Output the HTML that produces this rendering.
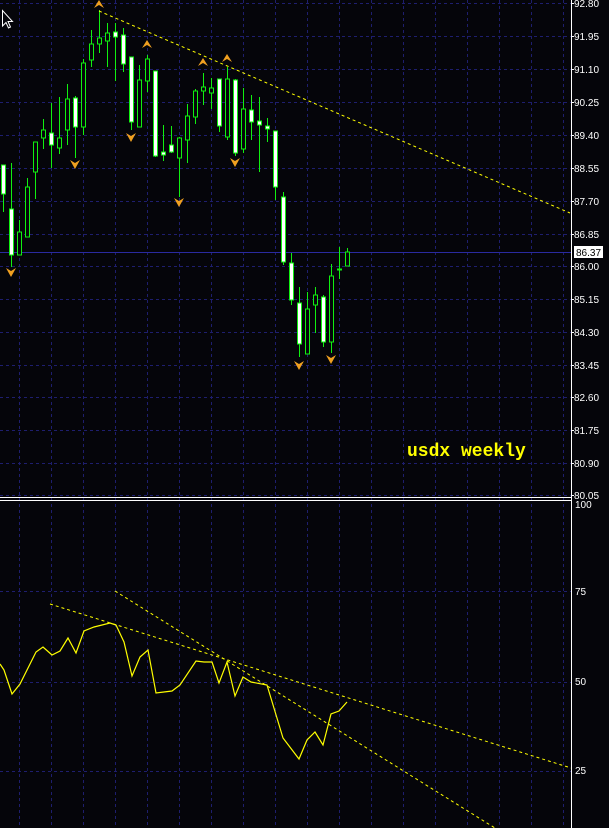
<!DOCTYPE html>
<html><head><meta charset="utf-8"><style>
html,body{margin:0;padding:0;background:#05050a;}
svg{display:block;}
.ax{font-family:"Liberation Sans",sans-serif;font-size:10px;fill:#fff;}
</style></head><body>
<svg width="609" height="828" viewBox="0 0 609 828" xmlns="http://www.w3.org/2000/svg">
<rect width="609" height="828" fill="#05050a"/>
<g stroke="#1e1e6e" stroke-width="1" stroke-dasharray="3,3" shape-rendering="crispEdges">
<line x1="19.5" y1="0" x2="19.5" y2="828"/><line x1="51.5" y1="0" x2="51.5" y2="828"/>
<line x1="83.5" y1="0" x2="83.5" y2="828"/><line x1="115.5" y1="0" x2="115.5" y2="828"/>
<line x1="147.5" y1="0" x2="147.5" y2="828"/><line x1="179.5" y1="0" x2="179.5" y2="828"/>
<line x1="211.5" y1="0" x2="211.5" y2="828"/><line x1="243.5" y1="0" x2="243.5" y2="828"/>
<line x1="275.5" y1="0" x2="275.5" y2="828"/><line x1="307.5" y1="0" x2="307.5" y2="828"/>
<line x1="339.5" y1="0" x2="339.5" y2="828"/><line x1="371.5" y1="0" x2="371.5" y2="828"/>
<line x1="403.5" y1="0" x2="403.5" y2="828"/><line x1="435.5" y1="0" x2="435.5" y2="828"/>
<line x1="467.5" y1="0" x2="467.5" y2="828"/><line x1="499.5" y1="0" x2="499.5" y2="828"/>
<line x1="531.5" y1="0" x2="531.5" y2="828"/><line x1="563.5" y1="0" x2="563.5" y2="828"/>
<line x1="0" y1="3.5" x2="571" y2="3.5"/><line x1="0" y1="36.5" x2="571" y2="36.5"/>
<line x1="0" y1="69.5" x2="571" y2="69.5"/><line x1="0" y1="102.5" x2="571" y2="102.5"/>
<line x1="0" y1="135.5" x2="571" y2="135.5"/><line x1="0" y1="168.5" x2="571" y2="168.5"/>
<line x1="0" y1="201.5" x2="571" y2="201.5"/><line x1="0" y1="234.5" x2="571" y2="234.5"/>
<line x1="0" y1="266.5" x2="571" y2="266.5"/><line x1="0" y1="299.5" x2="571" y2="299.5"/>
<line x1="0" y1="332.5" x2="571" y2="332.5"/><line x1="0" y1="365.5" x2="571" y2="365.5"/>
<line x1="0" y1="397.5" x2="571" y2="397.5"/><line x1="0" y1="430.5" x2="571" y2="430.5"/>
<line x1="0" y1="463.5" x2="571" y2="463.5"/><line x1="0" y1="495.5" x2="571" y2="495.5"/>
<line x1="0" y1="591.5" x2="571" y2="591.5"/><line x1="0" y1="682.5" x2="571" y2="682.5"/>
<line x1="0" y1="771.5" x2="571" y2="771.5"/>
</g>
<line x1="0" y1="252.5" x2="571" y2="252.5" stroke="#2a2aa0" stroke-width="1"/>
<g stroke="#10f010" stroke-width="1" shape-rendering="crispEdges">
<line x1="3.5" y1="165" x2="3.5" y2="212"/><rect x="1.5" y="165" width="4" height="29" fill="#fff"/>
<line x1="11.5" y1="163" x2="11.5" y2="267"/><rect x="9.5" y="209" width="4" height="46" fill="#fff"/>
<line x1="19.5" y1="220" x2="19.5" y2="255"/><rect x="17.5" y="232" width="4" height="23" fill="#05050a"/>
<line x1="27.5" y1="178" x2="27.5" y2="237"/><rect x="25.5" y="187" width="4" height="50" fill="#05050a"/>
<line x1="35.5" y1="142" x2="35.5" y2="199"/><rect x="33.5" y="142" width="4" height="30" fill="#05050a"/>
<line x1="43.5" y1="119" x2="43.5" y2="149"/><rect x="41.5" y="130" width="4" height="8" fill="#05050a"/>
<line x1="51.5" y1="103" x2="51.5" y2="168"/><rect x="49.5" y="133" width="4" height="12" fill="#fff"/>
<line x1="59.5" y1="97" x2="59.5" y2="154"/><rect x="57.5" y="138" width="4" height="10" fill="#05050a"/>
<line x1="67.5" y1="84" x2="67.5" y2="145"/><rect x="65.5" y="99" width="4" height="31" fill="#05050a"/>
<line x1="75.5" y1="96" x2="75.5" y2="158"/><rect x="73.5" y="98" width="4" height="29" fill="#fff"/>
<line x1="83.5" y1="59" x2="83.5" y2="135"/><rect x="81.5" y="63" width="4" height="64" fill="#05050a"/>
<line x1="91.5" y1="30" x2="91.5" y2="67"/><rect x="89.5" y="44" width="4" height="16" fill="#05050a"/>
<line x1="99.5" y1="10" x2="99.5" y2="53"/><rect x="97.5" y="38" width="4" height="6" fill="#05050a"/>
<line x1="107.5" y1="23" x2="107.5" y2="67"/><rect x="105.5" y="33" width="4" height="8" fill="#05050a"/>
<line x1="115.5" y1="23" x2="115.5" y2="81"/><rect x="113.5" y="32" width="4" height="5" fill="#fff"/>
<line x1="123.5" y1="28" x2="123.5" y2="72"/><rect x="121.5" y="35" width="4" height="29" fill="#fff"/>
<line x1="131.5" y1="57" x2="131.5" y2="130"/><rect x="129.5" y="57" width="4" height="65" fill="#fff"/>
<line x1="139.5" y1="65" x2="139.5" y2="127"/><rect x="137.5" y="80" width="4" height="47" fill="#05050a"/>
<line x1="147.5" y1="55" x2="147.5" y2="92"/><rect x="145.5" y="59" width="4" height="22" fill="#05050a"/>
<line x1="155.5" y1="71" x2="155.5" y2="157"/><rect x="153.5" y="71" width="4" height="85" fill="#fff"/>
<line x1="163.5" y1="125" x2="163.5" y2="161"/><rect x="161.5" y="152" width="4" height="3" fill="#fff"/>
<line x1="171.5" y1="126" x2="171.5" y2="153"/><rect x="169.5" y="145" width="4" height="7" fill="#fff"/>
<line x1="179.5" y1="137" x2="179.5" y2="197"/><rect x="177.5" y="138" width="4" height="20" fill="#05050a"/>
<line x1="187.5" y1="104" x2="187.5" y2="163"/><rect x="185.5" y="116" width="4" height="24" fill="#05050a"/>
<line x1="195.5" y1="89" x2="195.5" y2="124"/><rect x="193.5" y="91" width="4" height="26" fill="#05050a"/>
<line x1="203.5" y1="73" x2="203.5" y2="105"/><rect x="201.5" y="87" width="4" height="4" fill="#05050a"/>
<line x1="211.5" y1="78" x2="211.5" y2="109"/><rect x="209.5" y="88" width="4" height="5" fill="#05050a"/>
<line x1="219.5" y1="79" x2="219.5" y2="132"/><rect x="217.5" y="79" width="4" height="47" fill="#fff"/>
<line x1="227.5" y1="67" x2="227.5" y2="140"/><rect x="225.5" y="79" width="4" height="58" fill="#05050a"/>
<line x1="235.5" y1="79" x2="235.5" y2="156"/><rect x="233.5" y="80" width="4" height="73" fill="#fff"/>
<line x1="243.5" y1="88" x2="243.5" y2="153"/><rect x="241.5" y="109" width="4" height="40" fill="#05050a"/>
<line x1="251.5" y1="95" x2="251.5" y2="140"/><rect x="249.5" y="110" width="4" height="12" fill="#fff"/>
<line x1="259.5" y1="97" x2="259.5" y2="172"/><rect x="257.5" y="121" width="4" height="4" fill="#fff"/>
<line x1="267.5" y1="118" x2="267.5" y2="142"/><rect x="265.5" y="126" width="4" height="3" fill="#fff"/>
<line x1="275.5" y1="131" x2="275.5" y2="200"/><rect x="273.5" y="131" width="4" height="56" fill="#fff"/>
<line x1="283.5" y1="192" x2="283.5" y2="265"/><rect x="281.5" y="197" width="4" height="65" fill="#fff"/>
<line x1="291.5" y1="253" x2="291.5" y2="305"/><rect x="289.5" y="263" width="4" height="37" fill="#fff"/>
<line x1="299.5" y1="287" x2="299.5" y2="357"/><rect x="297.5" y="303" width="4" height="41" fill="#fff"/>
<line x1="307.5" y1="292" x2="307.5" y2="354"/><rect x="305.5" y="309" width="4" height="45" fill="#05050a"/>
<line x1="315.5" y1="287" x2="315.5" y2="333"/><rect x="313.5" y="295" width="4" height="10" fill="#05050a"/>
<line x1="323.5" y1="295" x2="323.5" y2="347"/><rect x="321.5" y="297" width="4" height="45" fill="#fff"/>
<line x1="331.5" y1="264" x2="331.5" y2="353"/><rect x="329.5" y="276" width="4" height="66" fill="#05050a"/>
<line x1="339.5" y1="247" x2="339.5" y2="279"/><line x1="337" y1="269.5" x2="342" y2="269.5" stroke-width="2"/>
<line x1="347.5" y1="248" x2="347.5" y2="266"/><rect x="345.5" y="252" width="4" height="14" fill="#05050a"/>
</g>
<g fill="#f0a020">
<path d="M94,8 L99,0 L104,8 L99,5 Z"/><path d="M142,48 L147,40 L152,48 L147,45 Z"/>
<path d="M198,66 L203,58 L208,66 L203,63 Z"/><path d="M222,62 L227,54 L232,62 L227,59 Z"/>
<path d="M6,268 L11,277 L16,268 L11,271 Z"/><path d="M70,160 L75,169 L80,160 L75,163 Z"/>
<path d="M126,133 L131,142 L136,133 L131,136 Z"/><path d="M174,198 L179,207 L184,198 L179,201 Z"/>
<path d="M230,158 L235,167 L240,158 L235,161 Z"/><path d="M294,361 L299,370 L304,361 L299,364 Z"/>
<path d="M326,355 L331,364 L336,355 L331,358 Z"/>
</g>
<line x1="99" y1="11" x2="570" y2="213" stroke="#ffff00" stroke-width="1" stroke-dasharray="3,3"/>
<line x1="50" y1="604" x2="571" y2="768" stroke="#ffff00" stroke-width="1" stroke-dasharray="3,3"/>
<line x1="115" y1="591" x2="495" y2="828" stroke="#ffff00" stroke-width="1" stroke-dasharray="3,3"/>
<polyline fill="none" stroke="#ffff00" stroke-width="1.2" points="0,664 4,670 12,694 20,684 36,652 43,647 52,655 60,651 68,638 76,653 84,631 94,627 110,623 116,625 124,642 132,676 140,657 148,650 156,693 172,691 180,685 196,661 204,662 212,662 219,683 227,662 235,696 243,677 251,682 267,685 283,738 299,759 307,740 315,732 323,745 331,714 339,711 347,702"/>
<text x="407" y="456" font-family="'Liberation Mono',monospace" font-weight="bold" font-size="18" fill="#ffff00">usdx weekly</text>
<line x1="0" y1="497.5" x2="571" y2="497.5" stroke="#fff"/>
<line x1="0" y1="500.5" x2="571" y2="500.5" stroke="#fff"/>
<line x1="571.5" y1="0" x2="571.5" y2="828" stroke="#fff"/>
<g stroke="#fff" shape-rendering="crispEdges">
<line x1="571" y1="3.5" x2="574" y2="3.5"/><line x1="571" y1="36.5" x2="574" y2="36.5"/><line x1="571" y1="69.5" x2="574" y2="69.5"/>
<line x1="571" y1="102.5" x2="574" y2="102.5"/><line x1="571" y1="135.5" x2="574" y2="135.5"/><line x1="571" y1="168.5" x2="574" y2="168.5"/>
<line x1="571" y1="201.5" x2="574" y2="201.5"/><line x1="571" y1="234.5" x2="574" y2="234.5"/><line x1="571" y1="266.5" x2="574" y2="266.5"/>
<line x1="571" y1="299.5" x2="574" y2="299.5"/><line x1="571" y1="332.5" x2="574" y2="332.5"/><line x1="571" y1="365.5" x2="574" y2="365.5"/>
<line x1="571" y1="397.5" x2="574" y2="397.5"/><line x1="571" y1="430.5" x2="574" y2="430.5"/><line x1="571" y1="463.5" x2="574" y2="463.5"/>
<line x1="571" y1="495.5" x2="574" y2="495.5"/>
</g>
<g class="ax">
<text x="574" y="7">92.80</text><text x="574" y="40">91.95</text><text x="574" y="73">91.10</text>
<text x="574" y="106">90.25</text><text x="574" y="139">89.40</text><text x="574" y="172">88.55</text>
<text x="574" y="205">87.70</text><text x="574" y="238">86.85</text><text x="574" y="270">86.00</text>
<text x="574" y="303">85.15</text><text x="574" y="336">84.30</text><text x="574" y="369">83.45</text>
<text x="574" y="401">82.60</text><text x="574" y="434">81.75</text><text x="574" y="467">80.90</text>
<text x="574" y="499">80.05</text>
<text x="575" y="508">100</text><text x="575" y="595">75</text><text x="575" y="685">50</text><text x="575" y="774">25</text>
</g>
<rect x="574" y="246" width="29" height="12" fill="#fff"/>
<text x="576" y="256" font-family="'Liberation Sans',sans-serif" font-size="10" fill="#000">86.37</text>
<path d="M2.5,10.5 L2.5,26 L6,22.5 L8.5,28 L10.5,27 L8,21.5 L12.5,21.5 Z" fill="#05050a" stroke="#fff" stroke-width="1"/>
</svg>
</body></html>
